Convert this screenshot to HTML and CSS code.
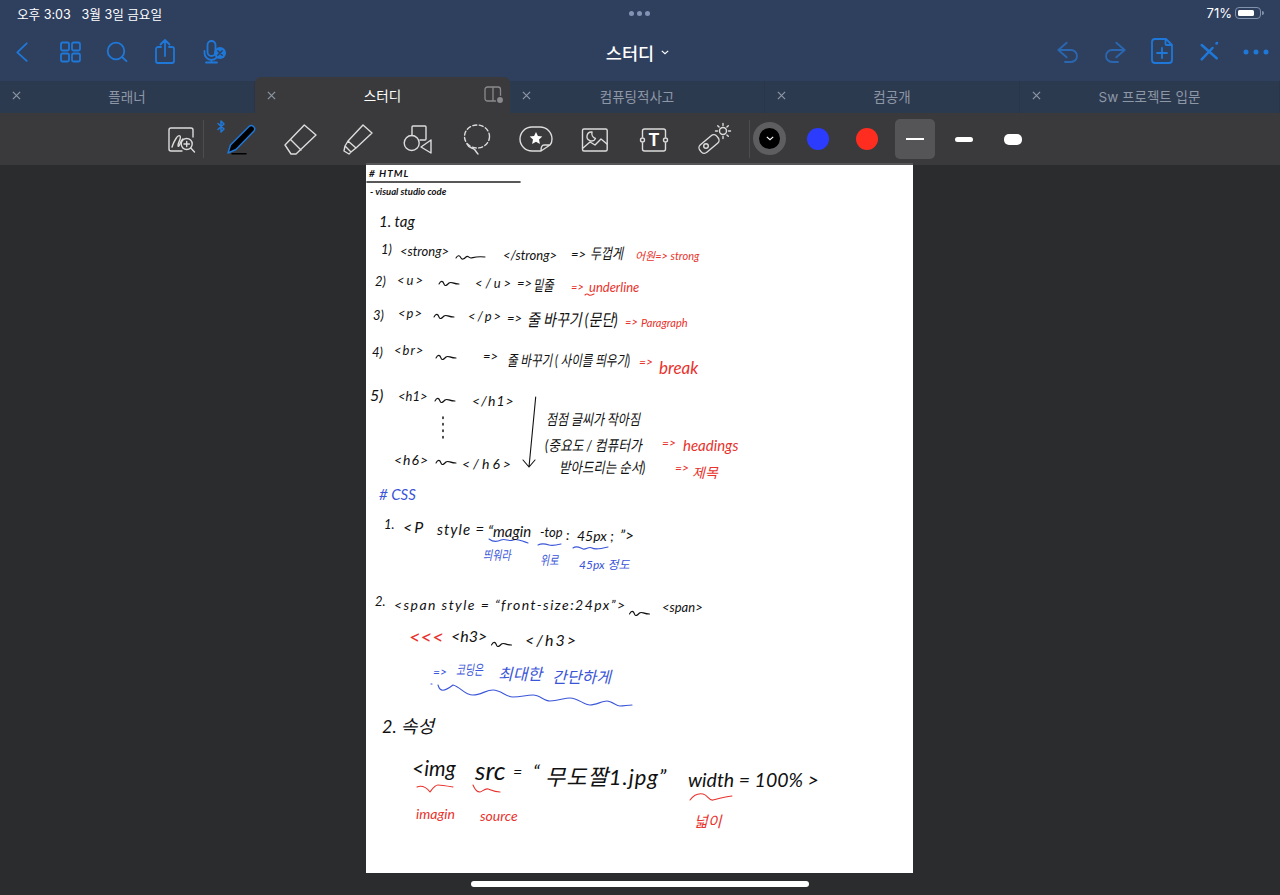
FILE: index.html
```html
<!DOCTYPE html>
<html lang="ko">
<head>
  <meta charset="UTF-8" />
  <meta name="viewport" content="width=device-width, initial-scale=1.0" />
  <title>스터디</title>
  <link rel="stylesheet" href="styles.css">
</head>
<body>
  <svg class="defs" width="0" height="0" aria-hidden="true">
    <symbol id="close" viewBox="0 0 10 10"><path d="M1 1l8 8M9 1L1 9"/></symbol>
    <symbol id="wiggle" viewBox="0 0 20 6" overflow="visible"><path d="M0 3c2-4 4-3 5 0s3 1 5-1 4 1 10 1"/></symbol>
  </svg>

  <header class="top">
    <div class="status">
      <span class="clock">오후 3:03&nbsp;&nbsp; 3월 3일 금요일</span>
      <span class="grabber"><i></i><i></i><i></i></span>
      <span class="power">71%<span class="battery"><i></i></span></span>
    </div>
    <nav class="nav">
      <div class="nav-left">
        <button class="nav-btn"><svg viewBox="0 0 32 32"><path d="M20.7 7.3l-9.4 9 9.4 8.6"/></svg></button>
        <button class="nav-btn"><svg viewBox="0 0 32 32"><rect x="7" y="6.5" width="8" height="8" rx="1.5"/><rect x="18" y="6.5" width="8" height="8" rx="1.5"/><rect x="7" y="17.5" width="8" height="8" rx="1.5"/><rect x="18" y="17.5" width="8" height="8" rx="1.5"/></svg></button>
        <button class="nav-btn"><svg viewBox="0 0 32 32"><circle cx="14" cy="15" r="8.3"/><path d="M20 21l4.500 4.200"/></svg></button>
        <button class="nav-btn"><svg viewBox="0 0 32 32"><path d="M11 11H8a2 2 0 0 0-2 2v12a2 2 0 0 0 2 2h14a2 2 0 0 0 2-2V13a2 2 0 0 0-2-2h-3M15 20V4M10.5 8.5L15 4l4.5 4.5"/></svg></button>
        <button class="nav-btn"><svg viewBox="0 0 32 32"><rect x="9.5" y="5" width="8" height="15" rx="4"/><path d="M6.5 15v2a7 7 0 0 0 14 0M13.5 24v2M8 26.5h11"/><circle class="solid" cx="22" cy="17" r="6"/><path class="cut" d="M19.8 14.8l4.4 4.4M24.2 14.8l-4.4 4.4"/></svg></button>
      </div>
      <h1 class="title">스터디 <svg class="caret" viewBox="0 0 10 6"><path d="M1 1l4 3.6L9 1"/></svg></h1>
      <div class="nav-right">
        <button class="nav-btn dim"><svg viewBox="0 0 32 32"><path d="M14.7 6.7L6.3 14l8.4 7.3M6.3 14H19a6 6 0 0 1 0 12h-6"/></svg></button>
        <button class="nav-btn dim"><svg viewBox="0 0 32 32"><path d="M17.3 6.7l8.4 7.3-8.4 7.3M25.7 14H13a6 6 0 0 0 0 12h6"/></svg></button>
        <button class="nav-btn"><svg viewBox="0 0 32 32"><path d="M9 3h11l6 6v15a3 3 0 0 1-3 3H9a3 3 0 0 1-3-3V6a3 3 0 0 1 3-3zM19.500 3v5a1 1 0 0 0 1 1H26M16 12v10M11 17h10"/></svg></button>
        <button class="nav-btn"><svg viewBox="0 0 32 32"><path class="thick" d="M8.700 23.300L19.500 12M8.700 9l15 13.300M23.500 7.500l.5-.5"/></svg></button>
        <button class="nav-btn"><svg viewBox="0 0 32 32"><circle class="solid" cx="6" cy="16" r="2.500"/><circle class="solid" cx="16" cy="16" r="2.500"/><circle class="solid" cx="26" cy="16" r="2.500"/></svg></button>
      </div>
    </nav>
  </header>

  <div class="tabs">
    <div class="tab"><svg class="tab-x"><use href="#close"/></svg><span>플래너</span></div>
    <div class="tab active">
      <svg class="tab-x"><use href="#close"/></svg><span>스터디</span>
      <svg class="split" viewBox="0 0 20 18"><rect x="1" y="1" width="15.500" height="14" rx="2.500"/><path d="M9 1v14"/><circle cx="16" cy="14" r="3.600"/></svg>
    </div>
    <div class="tab"><svg class="tab-x"><use href="#close"/></svg><span>컴퓨팅적사고</span></div>
    <div class="tab"><svg class="tab-x"><use href="#close"/></svg><span>컴공개</span></div>
    <div class="tab"><svg class="tab-x"><use href="#close"/></svg><span>Sw 프로젝트 입문</span></div>
  </div>

  <div class="toolbar">
    <button class="tool zoom-tool"><svg viewBox="0 0 32 32"><path d="M28 14V7a2 2 0 0 0-2-2H6a2 2 0 0 0-2 2v19a2 2 0 0 0 2 2h11M7 24c2-6 6-13 8-11s-3 8-2 10 3-6 5-7"/><circle cx="21.700" cy="21" r="5.500"/><path d="M19 21h5.400M21.700 18.400v5.200M25.800 25l3.700 4"/></svg></button>
    <span class="rule"></span>
    <div class="tools">
      <button class="tool pen">
        <svg class="bt" viewBox="0 0 8 13"><path d="M1 3.500l6 5.500-3 3V1l3 3-6 5.500"/></svg>
        <svg viewBox="0 0 40 40"><path class="pen-body" d="M7 34l2.500-8L28 7.500c1.500-1.300 3-1.300 4.500 0s1.500 3 .5 4.500L15 30.500z"/><path class="pen-line" d="M11 34.700h14"/></svg>
      </button>
      <button class="tool"><svg viewBox="0 0 40 40"><path d="M5 26L24.300 6 36 16 16 35H11zM10.500 20.500L21 31"/></svg></button>
      <button class="tool"><svg viewBox="0 0 40 40"><path d="M24 6l9 8-16 15-8-7zM9 22l-3 5 6 6 5-4M6 27l-1 5 5 3 2-2"/></svg></button>
      <button class="tool"><svg viewBox="0 0 40 40"><path d="M14 16.500V8a1 1 0 0 1 1-1h12a1 1 0 0 1 1 1v12a1 1 0 0 1-1 1h-5"/><circle cx="13.700" cy="24" r="7.500"/><path d="M23 28l10-7v13z"/></svg></button>
      <button class="tool"><svg viewBox="0 0 40 40"><ellipse class="dash" cx="20" cy="17.500" rx="12.500" ry="11.500"/><path d="M10 25c2 5 6 3 8 6s2 3 3 4"/></svg></button>
      <button class="tool"><svg viewBox="0 0 40 40"><path d="M25 32h-9a12 12 0 0 1 0-24h8a12 12 0 0 1 12 12c0 3-1 5-2 6zM25 32c0-4 1-6 3-6h6"/><path class="fill" d="M20 13l1.900 4.100 4.400.5-3.300 3 .9 4.400-3.900-2.200-3.900 2.200.9-4.400-3.300-3 4.400-.5z"/></svg></button>
      <button class="tool"><svg viewBox="0 0 40 40"><rect x="7.500" y="10" width="24.700" height="22" rx="1.500"/><path d="M8 29l7-6 5 3 6-6 6 5M17 13a4.500 4.500 0 1 0 3.500 6.500 5.500 5.500 0 0 1-3.500-6.500z"/></svg></button>
      <button class="tool"><svg viewBox="0 0 40 40"><path d="M8.500 18v-6a2 2 0 0 1 2-2h19a2 2 0 0 1 2 2v6M8.500 24v6a2 2 0 0 0 2 2h19a2 2 0 0 0 2-2v-6"/><circle cx="8.500" cy="21" r="2"/><circle cx="31.500" cy="21" r="2"/><text class="tee" x="20" y="27">T</text></svg></button>
      <button class="tool"><svg viewBox="0 0 40 40"><rect x="-11" y="-5" width="22" height="10" rx="4" transform="translate(16 25) rotate(-40)"/><circle cx="13" cy="27" r="2.300"/><circle cx="30" cy="12" r="3.500"/><path d="M30 4.500v2M30 17.500v2M22.500 12h2M35.500 12h2M24.700 6.700l1.400 1.400M33.900 15.900l1.400 1.400M35.300 6.700l-1.400 1.400"/></svg></button>
    </div>
    <span class="rule wide"></span>
    <div class="colors">
      <button class="swatch current"><svg class="caret" viewBox="0 0 10 6"><path d="M1 1l4 3.600L9 1"/></svg></button>
      <button class="swatch blue"></button>
      <button class="swatch red"></button>
    </div>
    <div class="sizes">
      <button class="size selected"><i class="fine"></i></button>
      <button class="size"><i class="medium"></i></button>
      <button class="size"><i class="broad"></i></button>
    </div>
  </div>

  <main class="canvas">
    <article class="paper">
      <svg class="strokes" viewBox="0 0 547 708">
        <path class="ink heavy" d="M1 17h153"/>
        <path class="ink" d="M90 93c2-4 4-2 5 0s3 1 5-1 3 1 5 1 4-2 14-1"/>
        <use class="ink" href="#wiggle" x="73" y="116" width="20" height="6"/>
        <use class="ink" href="#wiggle" x="68" y="149" width="20" height="6"/>
        <use class="ink" href="#wiggle" x="70" y="190" width="20" height="6"/>
        <use class="ink" href="#wiggle" x="69" y="233" width="20" height="6"/>
        <use class="ink" href="#wiggle" x="70" y="295" width="20" height="6"/>
        <use class="ink" href="#wiggle" x="262" y="446" width="23" height="6"/>
        <use class="ink" href="#wiggle" x="124" y="477" width="23" height="6"/>
        <path class="ink dots" d="M77 252v25"/>
        <path class="ink" d="M169.700 232L163 302M157 295l6 7 6-7"/>
        <path class="ink red" d="M219 130c2-2 3-1 4 0s3 0 5-1"/>
        <path class="ink blue" d="M123 374c4 3 8 3 12 1s8 2 12 0 8 1 15 3M172 380c4-2 8-1 11 0s8 0 12-1M207 383c4-3 7 0 10 1s6-3 9-1 8 1 16-1"/>
        <path class="ink blue" d="M65 519h1M72 520C74 527 78 527 87 520C95 522 98 530 107 530C115 530 120 525 127 525C135 525 140 532 147 532C155 532 160 530 167 530C174 530 178 536 184 536C192 536 198 533 204 533C212 533 218 540 224 540C230 540 236 536 241 536C246 536 250 541 254 541C258 541 262 540 266 540"/>
        <path class="ink red" d="M51 622c5-2 9 0 13 5 3-4 5-7 8-7s9 1 15 2M107 620c2 5 5 7 7 7s5-4 8-3 6 3 12 3M324 635c3-4 8-7 13-6s6 7 10 6 11-3 19-4"/>
      </svg>

      <span class="note h-title">#&nbsp;HTML</span>
      <span class="note h-sub">- visual studio code</span>
      <span class="note h-tag">1. tag</span>

      <span class="note a1">1)</span><span class="note a2">&lt;strong&gt;</span><span class="note a3">&lt;/strong&gt;</span><span class="note a4">=&gt;</span><span class="note a5">두껍게</span><span class="note a6 red">어원=&gt; strong</span>
      <span class="note b1">2)</span><span class="note b2">&lt;u&gt;</span><span class="note b3">&lt;/u&gt;</span><span class="note b4">=&gt;</span><span class="note b5">밑줄</span><span class="note b6 red">=&gt;</span><span class="note b7 red">underline</span>
      <span class="note c1">3)</span><span class="note c2">&lt;p&gt;</span><span class="note c3">&lt;/p&gt;</span><span class="note c4">=&gt;</span><span class="note c5">줄 바꾸기 (문단)</span><span class="note c6 red">=&gt;</span><span class="note c7 red">Paragraph</span>
      <span class="note d1">4)</span><span class="note d2">&lt;br&gt;</span><span class="note d3">=&gt;</span><span class="note d4">줄 바꾸기 ( 사이를 띄우기)</span><span class="note d5 red">=&gt;</span><span class="note d6 red">break</span>
      <span class="note e1">5)</span><span class="note e2">&lt;h1&gt;</span><span class="note e3">&lt;/h1&gt;</span><span class="note e4">&lt;h6&gt;</span><span class="note e5">&lt;/h6&gt;</span>
      <span class="note e6">점점 글씨가 작아짐</span><span class="note e7">(중요도 / 컴퓨터가</span><span class="note e8">받아드리는 순서)</span>
      <span class="note e9 red">=&gt;</span><span class="note e10 red">headings</span><span class="note e11 red">=&gt;</span><span class="note e12 red">제목</span>

      <span class="note css blue"># CSS</span>
      <span class="note f1">1.</span><span class="note f2">&lt;P</span><span class="note f3">style =</span><span class="note f4">“magin</span><span class="note f5">-top</span><span class="note f6">:</span><span class="note f7">45px ;</span><span class="note f8">”&gt;</span>
      <span class="note f9 blue">띄워라</span><span class="note f10 blue">위로</span><span class="note f11 blue">45px 정도</span>
      <span class="note g1">2.</span><span class="note g2">&lt;span style = “front-size:24px”&gt;</span><span class="note g3">&lt;span&gt;</span>
      <span class="note g4 red">&lt;&lt;&lt;</span><span class="note g5">&lt;h3&gt;</span><span class="note g6">&lt;/h3&gt;</span>
      <span class="note g7 blue">=&gt;</span><span class="note g8 blue">코딩은</span><span class="note g9 blue">최대한</span><span class="note g10 blue">간단하게</span>

      <span class="note i1">2. 속성</span>
      <span class="note i2">&lt;img</span><span class="note i3">src</span><span class="note i4">=</span><span class="note i5">“</span><span class="note i6">무도짤1.jpg”</span><span class="note i7">width = 100% &gt;</span>
      <span class="note i8 red">imagin</span><span class="note i9 red">source</span><span class="note i10 red">넓이</span>
    </article>
  </main>

  <div class="home-bar"></div>
</body>
</html>
```

FILE: styles.css
```css
* { box-sizing: border-box; }
html, body { height: 100%; }
body {
  margin: 0; height: 895px; overflow: hidden; display: flex; flex-direction: column;
  background: #2b2c2e; color: #fff;
  font-family: Inter, "Noto Sans CJK KR", sans-serif;
}
button { border: 0; padding: 0; background: none; display: flex; align-items: center; justify-content: center; }
.defs { position: absolute; }

/* header */
.top    { height: 81px; background: #2f405f; }
.status { height: 27px; padding: 0 19px 1px 17px; display: grid; grid-template-columns: 1fr auto 1fr; align-items: center; font-size: 13px; }
.clock  { font-size: 12.6px; }
.grabber { display: flex; gap: 3px; }
.grabber i { width: 5px; height: 5px; border-radius: 50%; background: #8293b5; }
.power  { display: flex; align-items: center; justify-content: flex-end; gap: 3px; }
.battery { position: relative; width: 26px; height: 12px; padding: 2px; border: 1px solid #8291ac; border-radius: 4px; }
.battery i { display: block; width: 16px; height: 100%; border-radius: 1.5px; background: #fff; }
.battery::after { content: ""; position: absolute; right: -3.5px; top: 3px; width: 2px; height: 4px; border-radius: 0 2px 2px 0; background: #8291ac; }

.nav       { height: 50px; display: grid; grid-template-columns: 1fr auto 1fr; align-items: center; }
.nav-left  { display: flex; gap: 4px; }
.nav-right { display: flex; gap: 3px; justify-content: flex-end; padding-right: 2px; }
.nav-btn   { width: 44px; height: 40px; }
.nav-btn svg { width: 32px; height: 32px; fill: none; stroke: #1f78d8; stroke-width: 1.8; stroke-linecap: round; stroke-linejoin: round; }
.nav-btn.dim svg { stroke: #2a67b0; }
.nav-btn .solid { fill: #1f78d8; stroke: none; }
.nav-btn .cut { stroke: #2f405f; stroke-width: 1.5; }
.nav-btn .thick { stroke-width: 2.5; }
.title { margin: 0; font-size: 17.500px; font-weight: 500; display: flex; align-items: center; gap: 7px; padding-right: 5px; }
.caret { width: 8px; height: 5px; fill: none; stroke: #fff; stroke-width: 1.500; }

/* tabs */
.tabs { height: 32px; display: grid; grid-template-columns: 255px 255px 255px 255px 260px; background: #2c3a50; }
.tab  { position: relative; padding-bottom: 3px; display: grid; grid-template-columns: 32px 1fr 32px; align-items: center; justify-items: center; font-size: 13.5px; color: #8e97a6; border-right: 1px solid #2a3548; }
.tab span { grid-column: 2; grid-row: 1; }
.tab-x { grid-column: 1; grid-row: 1; width: 9px; height: 9px; fill: none; stroke: #8e97a6; stroke-width: 1.300; }
.tab.active { margin-top: -4px; padding-bottom: 0; height: 36px; background: #3a3a3c; color: #fff; border: 0; border-radius: 6px 6px 0 0; }
.split { grid-column: 3; grid-row: 1; width: 20px; height: 18px; fill: none; stroke: #8a8a8c; stroke-width: 1.300; }
.split circle { fill: #8a8a8c; stroke: #3a3a3c; }

/* toolbar */
.toolbar { height: 52px; display: flex; align-items: center; padding-left: 161px; background: #3a3a3c; }
.tool { position: relative; width: 59px; height: 40px; }
.tool svg { width: 40px; height: 40px; fill: none; stroke: #dcdcdc; stroke-width: 1.400; stroke-linejoin: round; stroke-linecap: round; }
.zoom-tool { width: 40px; }
.zoom-tool svg { width: 32px; height: 32px; }
.tool .fill { fill: #fff; stroke: none; }
.tool .dash { stroke-dasharray: 4 2.500; }
.tool .tee { fill: #fff; stroke: none; font: 700 17px Inter, sans-serif; text-anchor: middle; }
.rule { width: 1px; height: 38px; margin-left: 2px; background: #4d4d4f; }
.rule.wide { margin-left: 7px; }
.tools { display: flex; margin-left: 7px; }
.tool .bt { position: absolute; left: 6px; top: 1px; width: 8px; height: 13px; stroke: #1f78d8; stroke-width: 1.500; }
.pen .pen-body { fill: #000; stroke: #1f78d8; stroke-width: 1.500; }
.pen .pen-line { stroke: #000; stroke-width: 1.500; }
.colors { display: flex; gap: 15px; margin-left: 3px; }
.swatch { width: 34px; height: 34px; border-radius: 50%; border: 6px solid transparent; background-clip: padding-box; }
.swatch.current { background: #000; border: 6px solid #5e5e60; width: 33px; height: 33px; }
.swatch.blue { background-color: #2b3cff; }
.swatch.red { background-color: #ff2d20; }
.sizes { display: flex; gap: 9px; margin-left: 11px; }
.size { width: 40px; height: 40px; border-radius: 5px; }
.size.selected { background: #555557; }
.size i { display: block; width: 18px; background: #fff; }
.fine   { height: 2px; }
.medium { height: 5px; border-radius: 2.500px; }
.broad  { height: 11px; border-radius: 5px; }

/* page */
.canvas { flex: 1; display: flex; justify-content: center; align-items: flex-start; }
.paper  { position: relative; width: 547px; height: 708px; margin-left: -1px; background: #fff; box-shadow: 0 -2px 0 #555557; color: #111; overflow: hidden; }
.strokes { position: absolute; inset: 0; width: 547px; height: 708px; }
.ink { fill: none; stroke: #111; stroke-width: 1.100; stroke-linecap: round; stroke-linejoin: round; }
.ink.heavy { stroke: #222; stroke-width: 1.600; }
.ink.dots { stroke-width: 1.500; stroke-dasharray: 1.500 5; }
.ink.red { stroke: #e8322c; }
.ink.blue { stroke: #3a55d8; }
.home-bar { position: absolute; left: 471px; top: 881px; width: 338px; height: 6px; border-radius: 3px; background: #fff; }

/* handwriting */
.note { position: absolute; white-space: nowrap; line-height: 1; font-size: 13px; font-style: italic; font-family: Lato, "Noto Sans CJK KR", sans-serif; transform-origin: left center; }
.note.red { color: #e8322c; }
.note.blue { color: #3a55d8; }

.h-title { left: 3px; top: 3px; font-size: 10px; font-weight: 700; letter-spacing: 1px; }
.h-sub { left: 4px; top: 22px; font-size: 9.500px; font-weight: 700; }
.h-tag { left: 13px; top: 49px; font-size: 15px; }

.a1 { left: 15px; top: 78px; }
.a2 { left: 34px; top: 80px; }
.a3 { left: 137px; top: 84px; }
.a4 { left: 205px; top: 83px; }
.a5 { left: 224px; top: 81px; font-size: 15px; transform: scaleX(.8); }
.a6 { left: 269px; top: 85px; font-size: 11px; }

.b1 { left: 9px; top: 110px; }
.b2 { left: 31px; top: 109px; letter-spacing: 2px; }
.b3 { left: 109px; top: 112px; letter-spacing: 3px; }
.b4 { left: 151px; top: 112px; }
.b5 { left: 167px; top: 113px; font-size: 15px; transform: scaleX(.75); }
.b6 { left: 205px; top: 116px; font-size: 11px; }
.b7 { left: 223px; top: 116px; }

.c1 { left: 7px; top: 144px; }
.c2 { left: 32px; top: 142px; letter-spacing: 1px; }
.c3 { left: 102px; top: 145px; letter-spacing: 2px; }
.c4 { left: 141px; top: 147px; }
.c5 { left: 161px; top: 146px; font-size: 17px; transform: scaleX(.82); }
.c6 { left: 259px; top: 151px; font-size: 11px; }
.c7 { left: 275px; top: 152px; font-size: 11px; }

.d1 { left: 6px; top: 181px; }
.d2 { left: 28px; top: 179px; letter-spacing: 1px; }
.d3 { left: 117px; top: 185px; }
.d4 { left: 141px; top: 188px; font-size: 15px; transform: scaleX(.77); }
.d5 { left: 273px; top: 191px; font-size: 12px; }
.d6 { left: 293px; top: 194px; font-size: 17px; }

.e1 { left: 4px; top: 222px; font-size: 16px; }
.e2 { left: 32px; top: 225px; }
.e3 { left: 106px; top: 229px; font-size: 14px; letter-spacing: 1px; }
.e4 { left: 28px; top: 288px; font-size: 14px; letter-spacing: 1px; }
.e5 { left: 96px; top: 292px; font-size: 14px; letter-spacing: 3px; }
.e6 { left: 180px; top: 247px; font-size: 15px; transform: scaleX(.8); }
.e7 { left: 179px; top: 273px; font-size: 15px; transform: scaleX(.85); }
.e8 { left: 193px; top: 295px; font-size: 15px; transform: scaleX(.83); }
.e9 { left: 296px; top: 272px; font-size: 12px; }
.e10 { left: 317px; top: 273px; font-size: 15px; }
.e11 { left: 309px; top: 297px; font-size: 12px; }
.e12 { left: 326px; top: 301px; font-size: 14px; }

.css { left: 13px; top: 322px; font-size: 15px; }
.f1 { left: 18px; top: 353px; }
.f2 { left: 37px; top: 354px; font-size: 16px; letter-spacing: 2px; }
.f3 { left: 71px; top: 357px; font-size: 15px; letter-spacing: 1px; }
.f4 { left: 122px; top: 359px; font-size: 15px; }
.f5 { left: 174px; top: 361px; font-size: 13px; }
.f6 { left: 200px; top: 363px; font-size: 14px; }
.f7 { left: 211px; top: 364px; font-size: 14px; }
.f8 { left: 254px; top: 363px; font-size: 15px; }
.f9 { left: 117px; top: 384px; font-size: 13px; transform: scaleX(.77); }
.f10 { left: 174px; top: 389px; font-size: 13px; transform: scaleX(.77); }
.f11 { left: 213px; top: 394px; font-size: 12px; }

.g1 { left: 9px; top: 430px; }
.g2 { left: 28px; top: 433px; font-size: 14px; letter-spacing: 1.440px; }
.g3 { left: 296px; top: 436px; }
.g4 { left: 43px; top: 461px; font-size: 20px; }
.g5 { left: 85px; top: 463px; font-size: 16px; }
.g6 { left: 159px; top: 467px; font-size: 16px; letter-spacing: 2px; }
.g7 { left: 67px; top: 501px; font-size: 12px; }
.g8 { left: 90px; top: 498px; font-size: 14px; transform: scaleX(.7); }
.g9 { left: 132px; top: 501px; font-size: 16px; }
.g10 { left: 186px; top: 504px; font-size: 16px; }

.i1 { left: 16px; top: 552px; font-size: 18px; }
.i2 { left: 46px; top: 592px; font-size: 21px; }
.i3 { left: 109px; top: 592px; font-size: 26px; }
.i4 { left: 147px; top: 599px; font-size: 16px; }
.i5 { left: 167px; top: 596px; font-size: 20px; }
.i6 { left: 179px; top: 601px; font-size: 22px; letter-spacing: 1px; }
.i7 { left: 322px; top: 605px; font-size: 19.500px; }
.i8 { left: 50px; top: 642px; font-size: 14px; }
.i9 { left: 114px; top: 644px; font-size: 14px; }
.i10 { left: 328px; top: 649px; font-size: 15px; }
```
